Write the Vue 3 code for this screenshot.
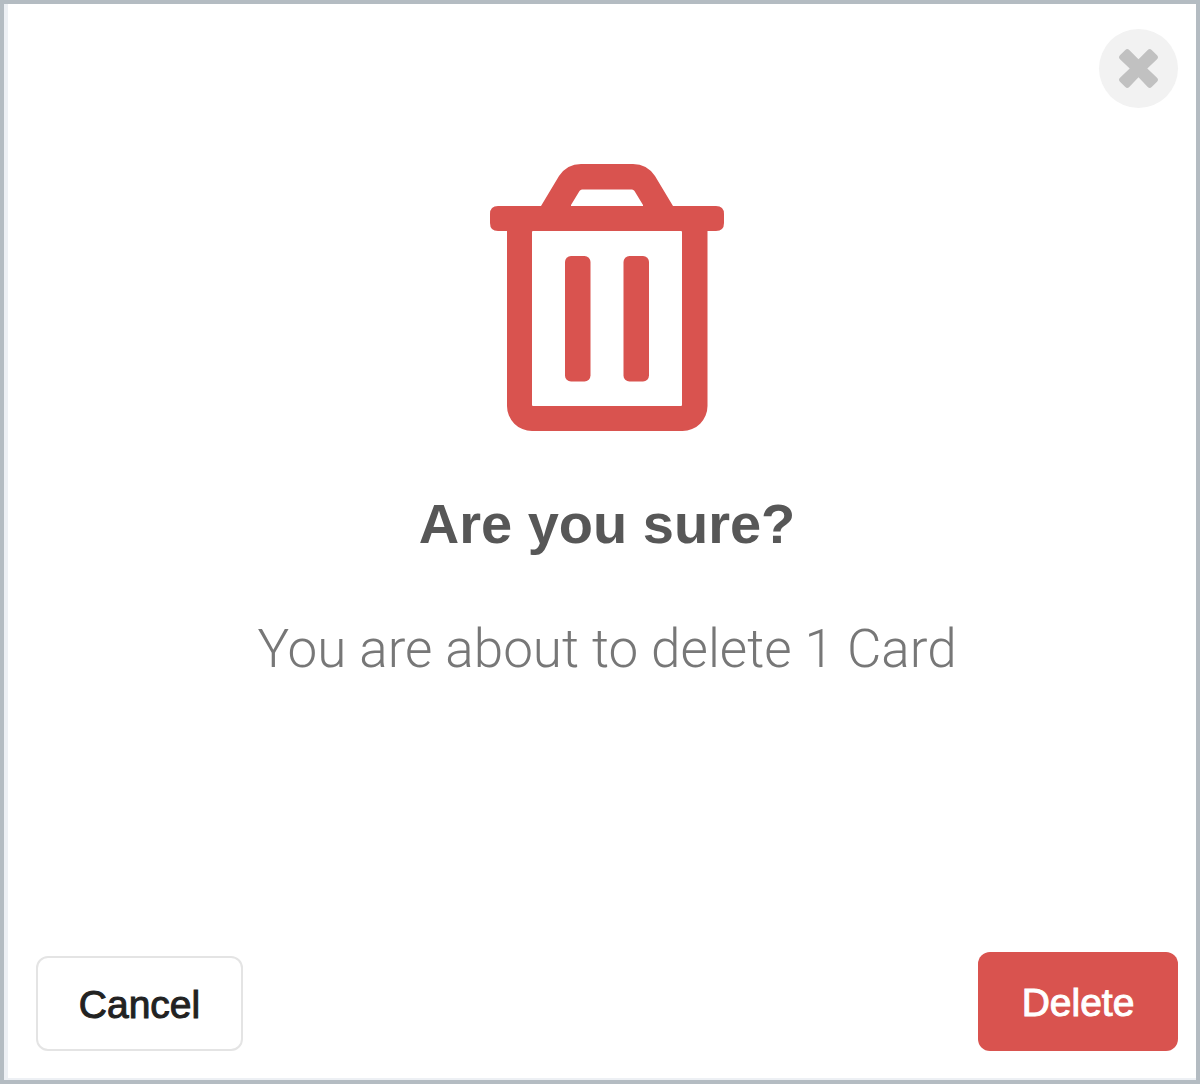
<script setup>
import { ref } from 'vue'

const emit = defineEmits(['close', 'confirm'])

const count = ref(1)
const itemName = ref('Card')
</script>

<template>
  <div class="modal" role="dialog" aria-labelledby="modal-title" aria-describedby="modal-text">
    <div class="modal-header">
      <button type="button" class="close" aria-label="Close" @click="emit('close')">
        <svg viewBox="0 0 40 40" aria-hidden="true">
          <path d="M20 10.500 29.500 1Q31.500-1 33.500 1L39 6.500Q41 8.500 39 10.500L29 20 39 29.500Q41 31.500 39 33.500L33.500 39Q31.500 41 29.500 39L20 29 10.500 39Q8.500 41 6.500 39L1 33.500Q-1 31.500 1 29.500L11 20 1 10.500Q-1 8.500 1 6.500L6.500 1Q8.500-1 10.500 1Z" />
        </svg>
      </button>
    </div>

    <div class="modal-body">
      <svg class="trash" viewBox="0 0 234 267" aria-hidden="true">
        <path
          fill-rule="evenodd"
          d="M51 42 69 12Q77 0 91 0H143Q157 0 165 12L183 42H226Q234 42 234 50V59Q234 67 226 67H217.500V242A25 25 0 0 1 192.500 267H42A25 25 0 0 1 17 242V67H8Q0 67 0 59V50Q0 42 8 42ZM81 42H153V41L144.500 27Q143.500 25.500 142 25.500H92Q90.500 25.500 89.500 27L81 41ZM43 67Q42 67 42 68V241Q42 242 43 242H191Q192 242 192 241V68Q192 67 191 67Z"
        />
        <rect x="75" y="92" width="25.500" height="125.500" rx="6" />
        <rect x="133.500" y="92" width="25.500" height="125.500" rx="6" />
      </svg>
      <h2 id="modal-title">Are you sure?</h2>
      <p id="modal-text">You are about to delete {{ count }} {{ itemName }}</p>
    </div>

    <div class="modal-footer">
      <button type="button" class="btn btn-cancel" @click="emit('close')">Cancel</button>
      <button type="button" class="btn btn-delete" @click="emit('confirm')">Delete</button>
    </div>
  </div>
</template>

<style>
body {
  margin: 0;
  background: #fff;
}
</style>

<style scoped>
.modal {
  display: flex;
  flex-direction: column;
  box-sizing: border-box;
  min-height: 100vh;
  padding: 25px 18px 29px 32px;
  border: 4px solid #b4bcc2;
  background: #fff;
  box-shadow: inset 4px -2px 0 #edf0f4;
  font-family: "Liberation Sans", Arial, sans-serif;
}

.modal-header {
  display: flex;
  justify-content: flex-end;
}

.close {
  display: flex;
  align-items: center;
  justify-content: center;
  width: 79px;
  height: 79px;
  padding: 0;
  border: none;
  border-radius: 50%;
  background: #f2f2f2;
  cursor: pointer;
}

.close svg {
  width: 39px;
  height: 39px;
  fill: #c1c1c1;
  overflow: visible;
}

.modal-body {
  display: flex;
  flex: 1;
  flex-direction: column;
  align-items: center;
  padding-top: 56px;
  text-align: center;
}

.trash {
  width: 234px;
  height: 267px;
  fill: #d9534f;
}

h2 {
  margin: 61px 0 0;
  color: #575757;
  font-size: 56px;
  line-height: 64px;
}

p {
  margin: 61px 0 0;
  color: #777;
  font-family: Roboto, "Liberation Sans", sans-serif;
  font-size: 53px;
  font-weight: 300;
  line-height: 64px;
}

.modal-footer {
  display: flex;
  align-items: flex-end;
  justify-content: space-between;
}

.btn {
  padding: 2px 40px 0;
  border-radius: 12px;
  font-family: inherit;
  font-size: 39px;
  cursor: pointer;
  -webkit-text-stroke: 1px currentColor;
}

.btn-cancel {
  min-width: 207px;
  height: 95px;
  border: 2px solid #e4e4e4;
  background: #fff;
  color: #222;
}

.btn-delete {
  min-width: 200px;
  height: 99px;
  border: none;
  background: #d9534f;
  color: #fff;
}
</style>
